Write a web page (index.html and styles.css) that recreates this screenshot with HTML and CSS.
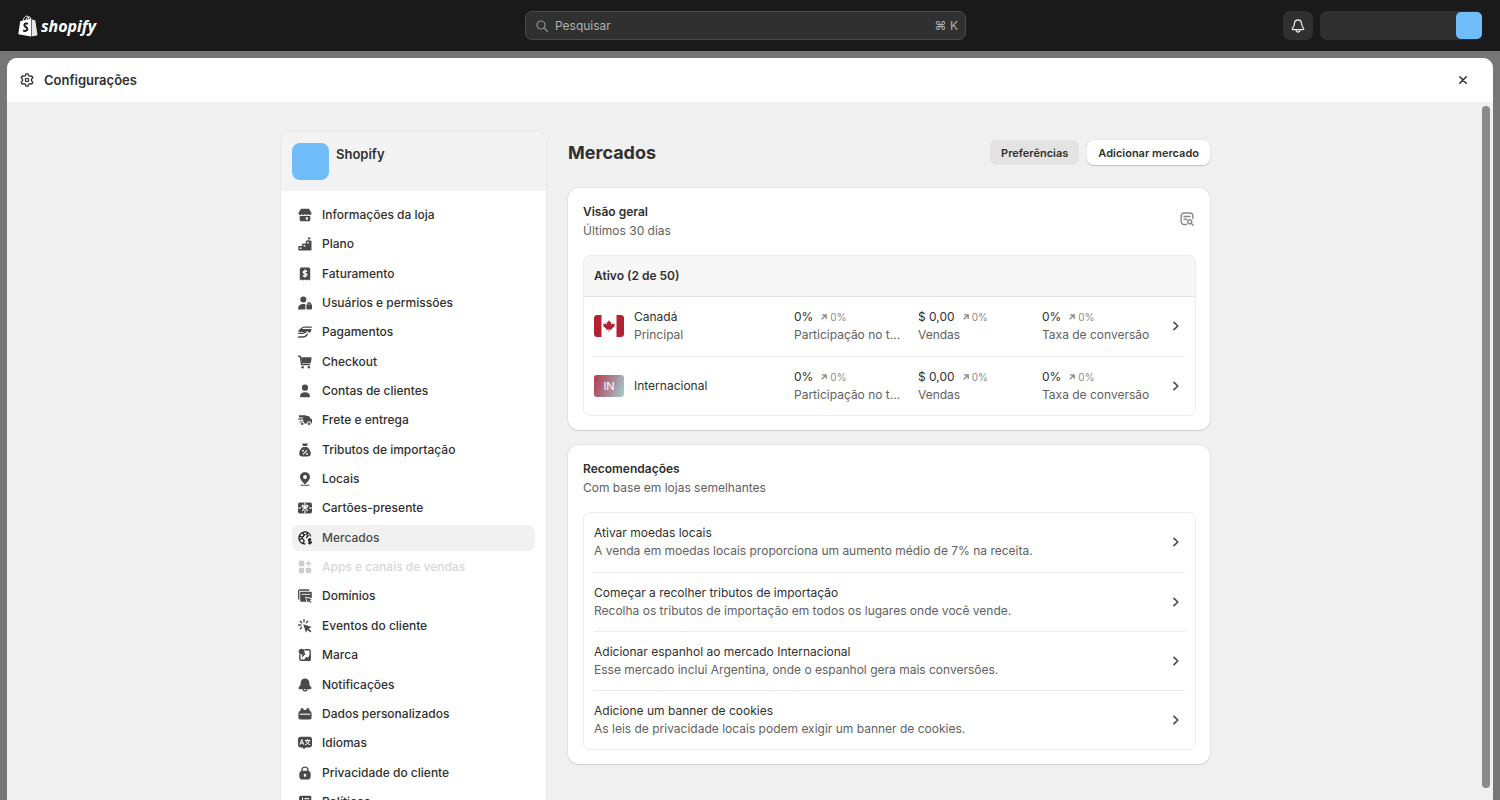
FILE: index.html
```html
<!DOCTYPE html>
<html lang="pt-BR">
<head>
<meta charset="utf-8">
<title>Shopify · Configurações · Mercados</title>
<link rel="stylesheet" href="styles.css">
</head>
<body>
<svg class="sprite" aria-hidden="true">
  <symbol id="chevron" viewBox="0 0 8 10"><path d="M2 1.4 5.8 5 2 8.6" fill="none" stroke="currentColor" stroke-width="1.7" stroke-linecap="round" stroke-linejoin="round"/></symbol>
  <symbol id="trend" viewBox="0 0 6 6"><path d="M.7 5.3 4.8 1.2M1 .9h4.2v4.2" fill="none" stroke="currentColor" stroke-width="1.3"/></symbol>
</svg>

<header class="topbar">
  <a class="logo" href="#" aria-label="Shopify">
    <svg class="logo-bag" viewBox="0 0 20 22" aria-hidden="true">
      <path d="M2.2 6.2 13 3.4v18.2L.3 19.3z" fill="#fff"/>
      <path d="M13.6 3.6 15 5l2.3.3 2.2 15-5.9 1.3z" fill="#e6e6e6"/>
      <path d="M5 6.4C5.4 3.4 7 1 8.8 1c1.300 0 2 1.200 2.100 3.800M8 5.400C8.400 3.200 9.500 1.600 11 1.700c1 .1 1.600 1 1.700 2.300" fill="none" stroke="#fff" stroke-width=".9"/>
      <path d="M10 8.900c-1.500-.9-3.700-.4-3.600 1.200.1 1.700 3 1.900 2.900 4 0 2-2.500 2.400-4.200 1.100" fill="none" stroke="#1a1a1a" stroke-width="2"/>
    </svg>
    <span class="logo-word">shopify</span>
  </a>
  <label class="search">
    <svg class="search-icon" viewBox="0 0 12 12" aria-hidden="true"><circle cx="5" cy="5" r="4" fill="none" stroke="currentColor" stroke-width="1.200"/><path d="m8 8 3.300 3.300" stroke="currentColor" stroke-width="1.300" stroke-linecap="round"/></svg>
    <input type="search" placeholder="Pesquisar" aria-label="Pesquisar">
    <kbd>⌘ K</kbd>
  </label>
  <div class="top-actions">
    <button class="bell" type="button" aria-label="Notificações">
      <svg viewBox="0 0 14 14" aria-hidden="true"><path d="M7 1C4.700 1 3.500 2.700 3.400 4.700 3.300 7 2.800 7.700 1.500 9.300c-.5.7-.2 1.300.6 1.300h9.800c.8 0 1.100-.6.6-1.300C11.200 7.700 10.700 7 10.600 4.700 10.500 2.700 9.300 1 7 1zM5 10.800c.1 1.400.9 2.200 2 2.200s1.900-.8 2-2.200" fill="none" stroke="currentColor" stroke-width="1.300" stroke-linejoin="round"/></svg>
    </button>
    <button class="account" type="button" aria-label="Conta"><span class="account-avatar"></span></button>
  </div>
</header>

<section class="modal" aria-labelledby="modal-title">
  <header class="modal-head">
    <svg class="gear" viewBox="0 0 14 14" aria-hidden="true"><path d="M5.900.800h2.200l.5 1.800 1.300.7 1.800-.5 1.100 1.900-1.300 1.400v1.800l1.300 1.400-1.100 1.900-1.800-.5-1.300.7-.5 1.800H5.900l-.5-1.800-1.300-.7-1.800.5-1.100-1.900 1.300-1.400V6.100L1.200 4.700l1.100-1.900 1.800.5 1.300-.7z" fill="none" stroke="currentColor" stroke-width="1.300" stroke-linejoin="round"/><circle cx="7" cy="7" r="1.700" fill="none" stroke="currentColor" stroke-width="1.300"/></svg>
    <h2 id="modal-title">Configurações</h2>
    <button class="close" type="button" aria-label="Fechar"><svg viewBox="0 0 8 8" aria-hidden="true"><path d="m.8.800 6.400 6.400M7.200.800.800 7.200" stroke="currentColor" stroke-width="1.500" stroke-linecap="round"/></svg></button>
  </header>

  <div class="modal-body">
    <div class="content">
      <aside class="sidebar">
        <div class="store"><span class="store-avatar"></span><strong>Shopify</strong></div>
        <nav class="nav" aria-label="Configurações">
          <a href="#"><svg viewBox="0 0 14 14"><path fill-rule="evenodd" d="M3 .800h8L13.600 5c0 1.200-.8 2-1.900 2-.9 0-1.400-.5-1.600-1-.3.600-.9 1-1.500 1S7.300 6.600 7 6c-.3.600-.9 1-1.600 1-.6 0-1.200-.4-1.500-1-.2.500-.7 1-1.600 1C1.200 7 .4 6.200.4 5zM1.700 8c1 .2 1.800-.1 2.300-.5.900.7 2.200.7 3 0 .8.700 2.100.7 3 0 .5.400 1.300.7 2.300.5v3.800c0 .9-.6 1.400-1.400 1.400H3.100c-.8 0-1.400-.5-1.400-1.400zM7.800 9.300v2.400h2V9.300z"/></svg>Informações da loja</a>
          <a href="#"><svg viewBox="0 0 14 14"><path fill-rule="evenodd" d="M10.300 0l2.900 1.300-2.100 1v1.200h1.400c.6 0 1 .4 1 1v8c0 .6-.4 1-1 1H1.300c-.6 0-1-.4-1-1V10c0-.6.400-1 1-1h2.800V7.500c0-.6.400-1 1-1h2.800v-2c0-.6.400-1 1-1h1.400zM1.800 10.400v1.700h1.600v-1.700zM5.600 7.900v1.600h1.600V7.900zM9.300 4.900v1.700h1.600V4.900z"/></svg>Plano</a>
          <a href="#"><svg viewBox="0 0 14 14"><path d="M3.500.500h7c1 0 1.700.7 1.700 1.700v11.300l-1.800-.9-1.700.9-1.700-.9-1.700.9-1.700-.9-1.800.9V2.200c0-1 .7-1.700 1.700-1.700z"/><path d="M9 4.500c-.7-.7-3.800-.8-3.800.7 0 1.700 3.800.8 3.800 2.700 0 1.600-3.200 1.500-4.100.6M7 2.500v8" fill="none" stroke="#fff" stroke-width="1.300"/></svg>Faturamento</a>
          <a href="#"><svg viewBox="0 0 14 14"><circle cx="5.300" cy="3.600" r="3"/><path d="M0 12.700C0 9.700 2.100 8 5.300 8c.8 0 1.500.1 2.100.3v5.100H.7c-.4 0-.7-.3-.7-.7z"/><path fill-rule="evenodd" d="M9.100 8.600c0-1.600 1-2.500 2.100-2.500s2.100.9 2.100 2.500c.5.1.7.400.7.900v3c0 .6-.4.900-.9.900H9.300c-.5 0-.9-.3-.9-.9v-3c0-.5.200-.8.700-.9zm1.300-.1h1.600c0-.7-.3-1.100-.8-1.100s-.8.400-.8 1.100z"/></svg>Usuários e permissões</a>
          <a href="#"><svg viewBox="0 0 14 14"><path d="M5.600 1.500h7.200c.8 0 1.300.5 1.100 1.200H4.100zM3 4h10.600l-.7 2.500c-.2.800-.7 1.100-1.400 1.100H9.900c.5-1-.4-1.900-1.400-1.400L6.900 7H1z"/><path d="M.5 8.300h4.300l3.600-1.500M.5 12h4c2.400 0 3.700-.9 4.900-2.900M.9 6l3.400-3.300" fill="none" stroke="currentColor" stroke-width="1.300" stroke-linecap="round"/></svg>Pagamentos</a>
          <a href="#"><svg viewBox="0 0 14 14"><path d="M.7 1.200h1.500l1.400 8.300h8.200" fill="none" stroke="currentColor" stroke-width="1.400" stroke-linecap="round" stroke-linejoin="round"/><path d="M3 2.200h9.700c.6 0 1 .5.900 1.100l-.7 4c-.1.600-.5.900-1.100.9H4z"/><circle cx="4.600" cy="12.300" r="1.200"/><circle cx="10.900" cy="12.300" r="1.200"/></svg>Checkout</a>
          <a href="#"><svg viewBox="0 0 14 14"><circle cx="7" cy="3.700" r="3.100"/><path d="M2 12.200C2.200 9.600 4 8.200 7 8.200s4.800 1.400 5 4c0 .7-.4 1-1 1H3c-.6 0-1-.3-1-1z"/></svg>Contas de clientes</a>
          <a href="#"><svg viewBox="0 0 14 14"><path d="M1 2.300h6.300c.6 0 1 .3 1.200.8h1.700c.6 0 .9.200 1.200.7l1 1.800 1 .4c.6.300.9.700.9 1.300v2.300c0 .5-.3.800-.8.800h-.4a2.100 2.100 0 0 0-4.200 0H6.300a2.100 2.100 0 0 0-4.200 0h-.3V8h3.500V6.800H.2V5.600h4.900V4.400H1z"/><circle cx="4.200" cy="10.700" r="1.300"/><circle cx="11" cy="10.700" r="1.300"/></svg>Frete e entrega</a>
          <a href="#"><svg viewBox="0 0 14 14"><path d="M4.200.500h5.600L9 3H5zM5 4h4c2.300 1.600 3.800 4.200 3.800 6.600 0 2-1.100 3-3 3H4.200c-1.900 0-3-1-3-3C1.200 8.200 2.700 5.600 5 4z"/><path d="m5 11.300 4-4" stroke="#fff" stroke-width="1.100"/><circle cx="5" cy="7.700" r=".9" fill="#fff"/><circle cx="9" cy="10.900" r=".9" fill="#fff"/></svg>Tributos de importação</a>
          <a href="#"><svg viewBox="0 0 14 14"><path fill-rule="evenodd" d="M7 .300c3 0 5 2.100 5 4.800 0 2.700-2.200 4.200-4.200 6.700-.4.500-1.200.5-1.600 0C4.200 9.300 2 7.800 2 5.100 2 2.400 4 .300 7 .300zM7 3.100A1.900 1.900 0 1 0 7 6.900 1.900 1.900 0 0 0 7 3.100z"/><path d="M3 13.200h8" stroke="currentColor" stroke-width="1.100" stroke-linecap="round"/></svg>Locais</a>
          <a href="#"><svg viewBox="0 0 14 14"><rect y="1.500" width="14" height="11" rx="2"/><path d="M7 1.200v3.200M7 9.200v3.600M0 7h3M11 7h3M7 6.900C5.500 6.900 3.900 6 4.200 4.900 4.600 3.700 6.600 4.300 7 6.900c.4-2.600 2.400-3.200 2.800-2 .3 1.100-1.300 2-2.800 2zm0 0L4.300 9.800M7 6.900l2.700 2.900" fill="none" stroke="#fff" stroke-width="1.100"/></svg>Cartões-presente</a>
          <a class="current" href="#" aria-current="page"><svg viewBox="0 0 14 14"><path d="M12.700 5.300A6 6 0 1 0 7.500 12.900M5 1.300c-.2 1.500.4 2.300 1.700 2.400L4.700 6 1.200 5.200M1.500 8.500 4.100 7.300l2.100 2.300-.9 2.900M9.700 1.600 8.600 3.400l1.500 1.300L8.200 7" fill="none" stroke="currentColor" stroke-width="1.200"/><path d="M13.300 8.600c-.8-.8-3-.7-3 .6 0 1.400 3.100.6 3.100 2.100 0 1.400-2.600 1.300-3.300.4M11.800 7v6.400" fill="none" stroke="currentColor" stroke-width="1.200"/></svg>Mercados</a>
          <a class="disabled" aria-disabled="true" href="#"><svg viewBox="0 0 14 14"><rect x=".8" y=".8" width="5.400" height="5.400" rx="1.300"/><rect x=".8" y="7.800" width="5.400" height="5.400" rx="1.300"/><rect x="7.800" y="7.800" width="5.400" height="5.400" rx="1.300"/><path d="M10.500.8v5.400M7.800 3.500h5.400" stroke="currentColor" stroke-width="1.500"/></svg>Apps e canais de vendas</a>
          <a href="#"><svg viewBox="0 0 14 14"><path d="M.7 10.500V2.200c0-.8.400-1.200 1.200-1.200h9.300" fill="none" stroke="currentColor" stroke-width="1.300"/><path d="M3.500 2.800h9c.8 0 1.300.5 1.300 1.300v5L7 7.500l1.500 5.200h-5c-.8 0-1.300-.5-1.300-1.300V4.100c0-.8.500-1.300 1.300-1.300z"/><path d="M3.600 5.300h8.800" stroke="#fff" stroke-width=".9"/><path d="m8 8.500 5.800 1.800-2 1 1.700 1.800-.8.800-1.800-1.800-1 1.800z"/></svg>Domínios</a>
          <a href="#"><svg viewBox="0 0 14 14"><path d="m5.200 5.200 8.600 2.900-3.100 1.500 2.700 2.700-1.100 1.200-2.800-2.800L8 13.800z"/><path d="M6 .600v2.200M2.200 2.200l1.500 1.500M.6 6h2.200M2.200 9.800l1.500-1.500M9.800 2.200 8.300 3.700" stroke="currentColor" stroke-width="1.300" stroke-linecap="round"/></svg>Eventos do cliente</a>
          <a href="#"><svg viewBox="0 0 14 14"><circle cx="3.600" cy="3.600" r="2.900"/><path d="M6.500 1.700h4.200c.9 0 1.500.6 1.500 1.500v7.600M1.800 6.500v4.200c0 .9.600 1.500 1.500 1.500h3" fill="none" stroke="currentColor" stroke-width="1.400"/><path d="m5.200 12.900 3-4.200 1.700 1L11.500 7l1.400 1.600v2.800c0 1-.6 1.500-1.500 1.500zM4 9.500 7.500 6l-1-1.500L4 7z"/></svg>Marca</a>
          <a href="#"><svg viewBox="0 0 14 14"><path d="M7 .500c2.700 0 4.200 1.700 4.300 4.200.1 2.300.6 3 1.800 4.300.8.900.4 2.300-.9 2.300H9.500C9.400 12.700 8.500 13.600 7 13.600s-2.400-.9-2.500-2.300H1.800C.5 11.300.1 9.900.9 9c1.200-1.300 1.700-2 1.800-4.300C2.800 2.200 4.300.500 7 .500z"/><path d="M5.700 11.300h2.600c-.2 1.300-2.400 1.300-2.600 0z" fill="#fff"/></svg>Notificações</a>
          <a href="#"><svg viewBox="0 0 14 14"><path d="M2.600 2.300c0-.7.400-1 1-1h1c.6 0 1 .3 1 1v.8h2.800v-.8c0-.7.400-1 1-1h1c.6 0 1 .3 1 1V3.600c1.500.5 2.200 1.700 2.200 3.200v3.600c0 1.200-.8 2-2 2H2.400c-1.200 0-2-.8-2-2V6.800c0-1.500.7-2.700 2.200-3.200z"/><path d="M1.700 7.200h10.600" stroke="#fff" stroke-width="1.100"/></svg>Dados personalizados</a>
          <a href="#"><svg viewBox="0 0 14 14"><path d="M2.500.7h9C13 .7 14 1.700 14 3.200v5.700c0 1.500-1 2.500-2.500 2.500H7.700L6 13.300l-1.600-1.900H2.500C1 11.400 0 10.400 0 8.900V3.200C0 1.700 1 .7 2.500.7z"/><path d="m1.900 8.700 1.900-5.200 1.900 5.200M2.500 7.100h2.600M7 4.500h5.200M9.600 3.200v1.300M11.300 4.700c-.5 2-2 3.400-4.100 4M8 4.900c.6 1.900 2 3.200 4.200 3.800" fill="none" stroke="#fff"/></svg>Idiomas</a>
          <a href="#"><svg viewBox="0 0 14 14"><path fill-rule="evenodd" d="M3.300 5V4c0-2.200 1.500-3.600 3.700-3.600S10.700 1.800 10.700 4v1c1.300.4 2 1.500 2 2.900v2.500c0 2-1.200 3.100-3.200 3.100h-5c-2 0-3.200-1.100-3.200-3.100V7.900c0-1.400.7-2.500 2-2.900zm1.400-.2h4.600V4c0-1.400-.9-2.200-2.300-2.200S4.700 2.600 4.700 4zM7 7.700a1.300 1.300 0 0 0-.7 2.400v1h1.400v-1A1.300 1.300 0 0 0 7 7.700z"/></svg>Privacidade do cliente</a>
          <a href="#"><svg viewBox="0 0 14 14"><path fill-rule="evenodd" d="M3 .7h9c.8 0 1.300.5 1.300 1.300v8.500H3.500v1.300h9.800v1.500H3c-1.300 0-2-.7-2-2V2.700c0-1.300.7-2 2-2zM4 2.500v6h1v-6zM6.500 3v1.300h4.700V3z"/></svg>Políticas</a>
        </nav>
      </aside>

      <main class="main">
        <div class="page-head">
          <h1>Mercados</h1>
          <button class="btn" type="button">Preferências</button>
          <button class="btn primary" type="button">Adicionar mercado</button>
        </div>

        <section class="card">
          <div class="card-head">
            <div>
              <h3>Visão geral</h3>
              <p>Últimos 30 dias</p>
            </div>
            <button class="report" type="button" aria-label="Ver relatório"><svg viewBox="0 0 14 14" aria-hidden="true"><path d="M6.500 12.500H4A2.800 2.800 0 0 1 1.200 9.700V3.800A2.800 2.800 0 0 1 4 1h6a2.800 2.800 0 0 1 2.800 2.800v2.700M4 4.500h6M4 7.200h2.500" fill="none" stroke="currentColor" stroke-width="1.400" stroke-linecap="round"/><circle cx="9.700" cy="9.700" r="2" fill="none" stroke="currentColor" stroke-width="1.400"/><path d="m11.200 11.200 2 2" stroke="currentColor" stroke-width="1.400" stroke-linecap="round"/></svg></button>
          </div>
          <div class="box">
            <h4 class="box-title">Ativo (2 de 50)</h4>
            <a class="row" href="#">
              <svg class="flag" viewBox="0 0 30 22" aria-hidden="true"><rect width="30" height="22" rx="2" fill="#fff"/><path d="M7.500 0H2a2 2 0 0 0-2 2v18a2 2 0 0 0 2 2h5.500zM22.500 0H28a2 2 0 0 1 2 2v18a2 2 0 0 1-2 2h-5.500z" fill="#b22234"/><path d="m15 5 1.200 2.200 1.200-.5-.4 3 1.700-1.500.4.900 1.800-.3-.6 1.700.7.600-3.200 2.500.3 1.200-2.800-.4.100 2.600h-.8l.1-2.600-2.800.4.300-1.200L9 11.100l.7-.6-.6-1.700 1.800.3.400-.9 1.700 1.500-.4-3 1.200.5z" fill="#b22234"/></svg>
              <span class="name">Canadá<small>Principal</small></span>
              <span class="metric"><span class="value">0% <em><svg><use href="#trend"/></svg>0%</em></span><small>Participação no total</small></span>
              <span class="metric"><span class="value">$ 0,00 <em><svg><use href="#trend"/></svg>0%</em></span><small>Vendas</small></span>
              <span class="metric"><span class="value">0% <em><svg><use href="#trend"/></svg>0%</em></span><small>Taxa de conversão</small></span>
              <svg class="chevron"><use href="#chevron"/></svg>
            </a>
            <a class="row" href="#">
              <span class="flag intl">IN</span>
              <span class="name">Internacional</span>
              <span class="metric"><span class="value">0% <em><svg><use href="#trend"/></svg>0%</em></span><small>Participação no total</small></span>
              <span class="metric"><span class="value">$ 0,00 <em><svg><use href="#trend"/></svg>0%</em></span><small>Vendas</small></span>
              <span class="metric"><span class="value">0% <em><svg><use href="#trend"/></svg>0%</em></span><small>Taxa de conversão</small></span>
              <svg class="chevron"><use href="#chevron"/></svg>
            </a>
          </div>
        </section>

        <section class="card">
          <div class="card-head">
            <div>
              <h3>Recomendações</h3>
              <p>Com base em lojas semelhantes</p>
            </div>
          </div>
          <div class="box">
            <a class="row tip" href="#"><span class="name">Ativar moedas locais<small>A venda em moedas locais proporciona um aumento médio de 7% na receita.</small></span><svg class="chevron"><use href="#chevron"/></svg></a>
            <a class="row tip" href="#"><span class="name">Começar a recolher tributos de importação<small>Recolha os tributos de importação em todos os lugares onde você vende.</small></span><svg class="chevron"><use href="#chevron"/></svg></a>
            <a class="row tip" href="#"><span class="name">Adicionar espanhol ao mercado Internacional<small>Esse mercado inclui Argentina, onde o espanhol gera mais conversões.</small></span><svg class="chevron"><use href="#chevron"/></svg></a>
            <a class="row tip" href="#"><span class="name">Adicione um banner de cookies<small>As leis de privacidade locais podem exigir um banner de cookies.</small></span><svg class="chevron"><use href="#chevron"/></svg></a>
          </div>
        </section>
      </main>
    </div>
    <div class="scrollbar"></div>
  </div>
</section>
</body>
</html>
```
FILE: styles.css
```css
* { box-sizing: border-box; margin: 0; }

body {
  height: 100vh;
  overflow: hidden;
  display: flex;
  flex-direction: column;
  background: #767676;
  color: #303030;
  font-family: Inter, "Liberation Sans", sans-serif;
  font-size: 12px;
  line-height: 18px;
}

a { color: inherit; text-decoration: none; }
button { font: inherit; color: inherit; border: 0; padding: 0; cursor: pointer; }
.sprite { display: none; }

/* Top bar */
.topbar {
  flex: none;
  display: grid;
  grid-template-columns: 1fr minmax(0, 441px) 1fr;
  align-items: center;
  height: 51px;
  padding: 0 18px 0 9px;
  background: #1a1a1a;
}
.logo { display: flex; align-items: center; gap: 3px; padding-left: 9px; color: #fff; }
.logo-bag { width: 20px; height: 22px; }
.logo-word { font: italic 700 16px/22px "Open Sans", sans-serif; }
.search {
  display: flex;
  align-items: center;
  gap: 7px;
  height: 29px;
  padding: 0 7px 0 10px;
  border: 1px solid #4a4a4a;
  border-radius: 7px;
  background: #303030;
  color: #b0b0b0;
}
.search-icon { flex: none; width: 12px; height: 12px; color: #8f8f8f; }
.search input {
  flex: 1;
  min-width: 0;
  padding: 0;
  border: 0;
  outline: 0;
  background: none;
  color: inherit;
  font: inherit;
}
.search input::placeholder { color: inherit; opacity: 1; }
.search kbd { font: inherit; }
.top-actions { display: flex; justify-content: flex-end; gap: 7px; }
.bell {
  display: grid;
  place-items: center;
  width: 30px;
  height: 29px;
  border-radius: 7px;
  background: #303030;
  color: #e3e3e3;
}
.bell svg { width: 14px; height: 14px; }
.account {
  display: flex;
  align-items: center;
  justify-content: flex-end;
  width: 162px;
  height: 29px;
  border-radius: 7px;
  background: #303030;
}
.account-avatar { width: 26px; height: 27px; border-radius: 5px; background: #70bdfa; }

/* Settings window */
.modal {
  flex: 1;
  min-height: 0;
  display: flex;
  flex-direction: column;
  margin: 7px 7px 0;
  overflow: hidden;
  border-radius: 10px 10px 0 0;
  background: #f0f0f0;
}
.modal-head {
  flex: none;
  display: flex;
  align-items: center;
  gap: 10px;
  height: 44px;
  padding: 0 22px 0 13px;
  background: #fff;
}
.gear { width: 14px; height: 14px; }
.modal-head h2 { flex: 1; font-size: 13px; font-weight: 600; }
.close { display: grid; place-items: center; width: 16px; height: 16px; background: none; }
.close svg { width: 8px; height: 8px; }
.modal-body { flex: 1; min-height: 0; display: flex; }
.scrollbar { flex: none; width: 8px; margin: 4px 3px 12px 0; border-radius: 4px; background: #8a8a8a; }
.content {
  flex: 1;
  display: grid;
  grid-template-columns: 265px minmax(0, 642px);
  justify-content: center;
  align-items: start;
  gap: 22px;
  padding: 30px 0 0 2px;
}

/* Sidebar */
.sidebar {
  overflow: hidden;
  border-radius: 10px;
  background: #fff;
  box-shadow: 0 0 0 1px #e8e8e8;
}
.store {
  display: flex;
  gap: 7px;
  padding: 11px;
  background: #f3f3f3;
}
.store-avatar { width: 37px; height: 37px; border-radius: 8px; background: #70bdfa; }
.store strong { font-size: 13px; font-weight: 600; line-height: 22px; }
.nav {
  display: flex;
  flex-direction: column;
  justify-content: space-between;
  min-height: calc(100vh - 165px);
  padding: 11px;
}
.nav a {
  display: flex;
  align-items: center;
  gap: 10px;
  height: 26px;
  padding: 0 6px;
  border-radius: 7px;
  font-weight: 500;
}
.nav svg { flex: none; width: 14px; height: 14px; fill: currentColor; color: #4a4a4a; }
.nav .current { background: #f1f1f1; color: #4a4a4a; }
.nav .current svg { color: #1a1a1a; }
.nav .disabled { color: #d8d8d8; }
.nav .disabled svg { color: #cccccc; }

/* Main column */
.page-head { display: flex; align-items: center; gap: 8px; height: 41px; margin-bottom: 15px; }
.page-head h1 { flex: 1; font-size: 18px; font-weight: 700; line-height: 24px; }
.btn { height: 25px; padding: 0 11px; border-radius: 7px; background: #e3e3e3; font-size: 11px; font-weight: 600; line-height: 16px; }
.btn.primary { background: #fff; box-shadow: 0 1px 1px #c4c4c4, 0 0 0 1px #e8e8e8; }
.card {
  margin-bottom: 15px;
  padding: 14px 14px 14px 15px;
  border-radius: 11px;
  background: #fff;
  box-shadow: 0 1px 1px #cfcfcf, 0 0 0 1px #e4e4e4;
}
.card-head { display: flex; align-items: flex-start; justify-content: space-between; padding-bottom: 14px; }
.card-head h3 { font-size: 12px; font-weight: 600; line-height: 19px; }
.card-head p { color: #616161; line-height: 20px; }
.report { display: grid; place-items: center; width: 18px; height: 34px; background: none; color: #8a8a8a; }
.report svg { width: 14px; height: 14px; }
.box { overflow: hidden; border: 1px solid #ededed; border-radius: 7px; }
.box-title {
  padding: 11px 10px;
  border-bottom: 1px solid #e3e3e3;
  background: #f7f7f7;
  font-size: 12px;
  font-weight: 600;
}
.row {
  display: grid;
  grid-template-columns: 30px 150px 114px 114px 1fr 18px;
  align-items: center;
  column-gap: 10px;
  height: 59px;
  margin: 0 10px;
  padding-bottom: 1px;
}
.row + .row { border-top: 1px solid #ebebeb; }
.tip { grid-template-columns: 1fr 18px; }
.row small { display: block; overflow: hidden; color: #616161; font-size: 12px; white-space: nowrap; text-overflow: ellipsis; }
.metric { min-width: 0; padding-right: 4px; }
.value { display: flex; align-items: center; gap: 8px; }
.value em { display: flex; align-items: center; gap: 3px; color: #8a8a8a; font-size: 10px; font-style: normal; }
.value svg { width: 6px; height: 6px; }
.chevron { justify-self: center; width: 8px; height: 10px; color: #4a4a4a; }
.flag { width: 30px; height: 22px; border-radius: 3px; }
.intl {
  display: grid;
  place-items: center;
  background: linear-gradient(110deg, #b5384f, #a98f9c 60%, #9fd6cf);
  color: #fff;
  font-size: 11px;
}
```
